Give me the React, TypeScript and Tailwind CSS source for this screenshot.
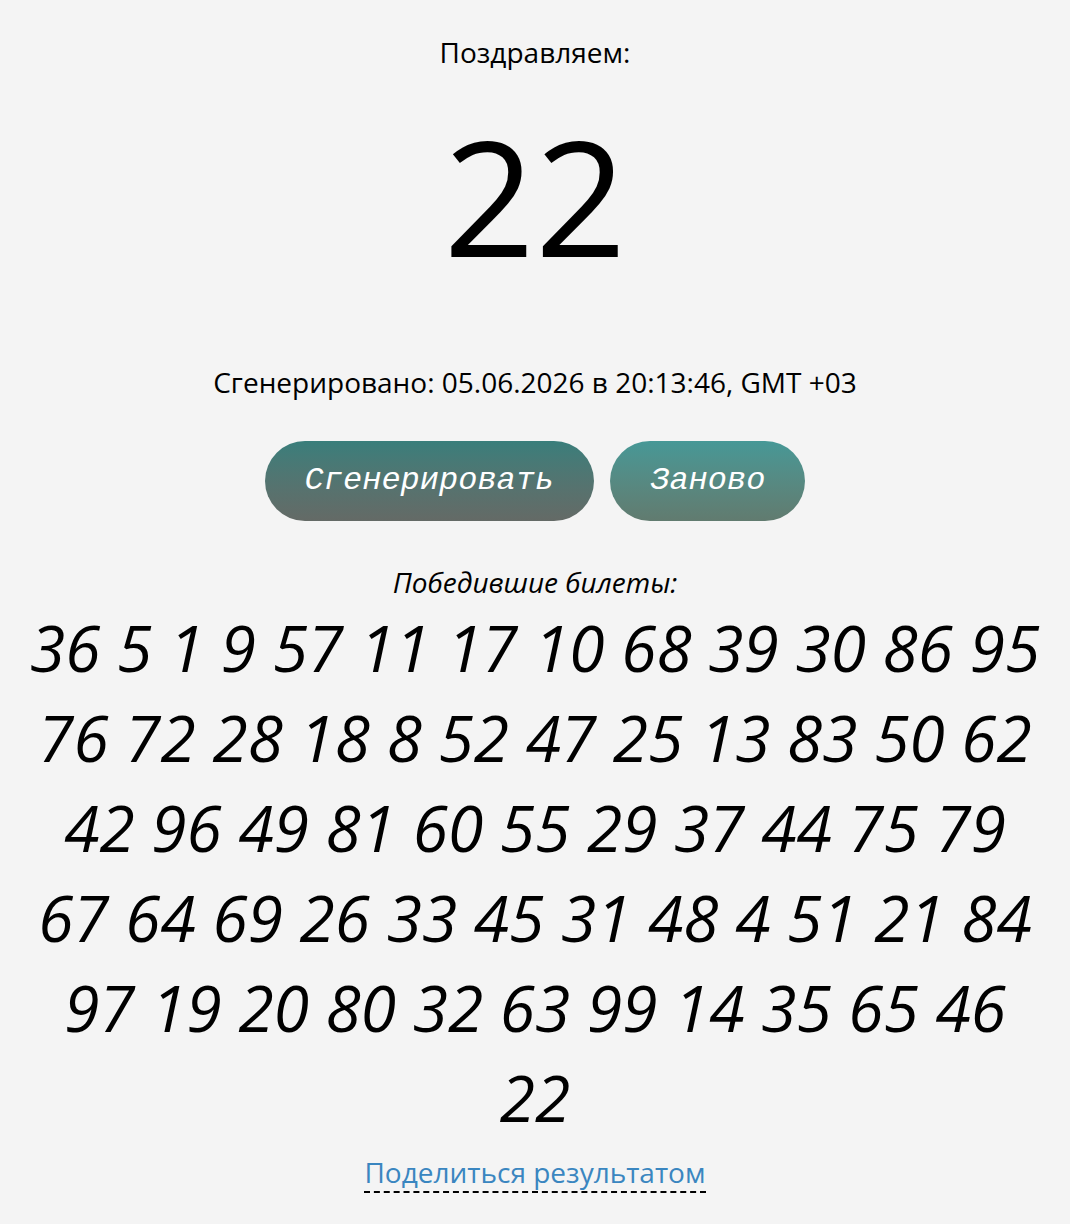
import React from 'react';

const tickets = [
  36, 5, 1, 9, 57, 11, 17, 10, 68, 39, 30, 86, 95, 76, 72, 28, 18, 8, 52, 47, 25, 13, 83, 50, 62, 42, 96, 49, 81, 60,
  55, 29, 37, 44, 75, 79, 67, 64, 69, 26, 33, 45, 31, 48, 4, 51, 21, 84, 97, 19, 20, 80, 32, 63, 99, 14, 35, 65, 46,
  22,
];

const App: React.FC = () => {
  return (
    <div className="min-h-[1224px] bg-[#f4f4f4] text-black font-['Open_Sans',sans-serif] text-center pt-[34px]">
      <p className="text-[28px] leading-[36px]">Поздравляем:</p>
      <div className="text-[160px] leading-[200px] mt-[25px]">22</div>

      <p className="text-[28px] leading-[36px] mt-[69px]">Сгенерировано: 05.06.2026 в 20:13:46, GMT +03</p>

      <div className="flex justify-center gap-4 mt-[41px]">
        <button className="h-[80px] px-10 rounded-full bg-linear-to-b from-[#397e7b] to-[#646a66] text-white italic text-[32px] font-['Liberation_Mono',monospace]">
          Сгенерировать
        </button>
        <button className="h-[80px] px-10 rounded-full bg-linear-to-b from-[#469896] to-[#617b6f] text-white italic text-[32px] font-['Liberation_Mono',monospace]">
          Заново
        </button>
      </div>

      <p className="italic text-[28px] leading-[36px] mt-[43px]">Победившие билеты:</p>
      <div className="italic text-[64px] leading-[90px] px-[25px] mt-[3px]">
        {tickets.join(' ')}
      </div>

      <div className="mt-[13px]">
        <a className="inline-block text-[#3a86c0] text-[28px] leading-[32px] pb-[3px] border-b-2 border-dashed border-black cursor-pointer">
          Поделиться результатом
        </a>
      </div>
    </div>
  );
};

export default App;
